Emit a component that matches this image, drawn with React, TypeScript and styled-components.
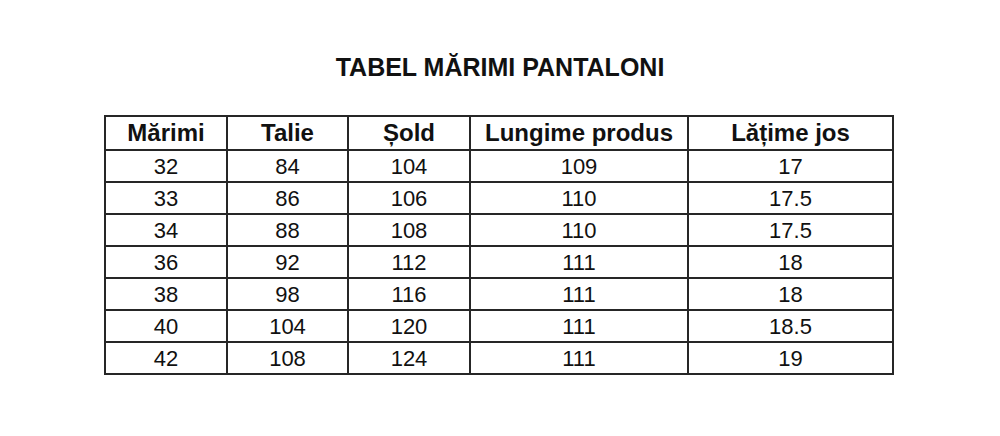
import React from "react";
import styled, { createGlobalStyle } from "styled-components";

const GlobalStyle = createGlobalStyle`
  html, body {
    margin: 0;
    padding: 0;
    background: #ffffff;
  }
  body {
    font-family: "Liberation Sans", Arial, sans-serif;
    color: #111111;
  }
`;

const Page = styled.div`
  width: 1000px;
  height: 436px;
  display: flex;
  flex-direction: column;
  align-items: center;
  padding-top: 53px;
  box-sizing: border-box;
`;

const Title = styled.h1`
  margin: 0 0 34px 0;
  font-size: 25px;
  line-height: 28px;
  font-weight: bold;
  color: #111111;
`;

const Table = styled.table`
  border-collapse: collapse;
  table-layout: fixed;
  width: 788px;
  margin-left: -2px;
  border: 2px solid #262626;
`;

const HeadCell = styled.th<{ $w: number }>`
  width: ${(p) => p.$w - 2}px;
  height: 32px;
  padding: 0;
  border: 2px solid #262626;
  font-size: 24px;
  font-weight: bold;
  text-align: center;
  vertical-align: middle;
  line-height: 28px;
`;

const Cell = styled.td`
  height: 28px;
  padding: 2px 0 0 0;
  border: 2px solid #262626;
  font-size: 22px;
  text-align: center;
  vertical-align: middle;
  line-height: 26px;
`;

const columns = [
  { label: "Mărimi", w: 122 },
  { label: "Talie", w: 121 },
  { label: "Șold", w: 122 },
  { label: "Lungime produs", w: 218 },
  { label: "Lățime jos", w: 205 },
];

const rows = [
  ["32", "84", "104", "109", "17"],
  ["33", "86", "106", "110", "17.5"],
  ["34", "88", "108", "110", "17.5"],
  ["36", "92", "112", "111", "18"],
  ["38", "98", "116", "111", "18"],
  ["40", "104", "120", "111", "18.5"],
  ["42", "108", "124", "111", "19"],
];

export default function App() {
  return (
    <>
      <GlobalStyle />
      <Page>
        <Title>TABEL MĂRIMI PANTALONI</Title>
        <Table>
          <thead>
            <tr>
              {columns.map((c) => (
                <HeadCell key={c.label} $w={c.w}>
                  {c.label}
                </HeadCell>
              ))}
            </tr>
          </thead>
          <tbody>
            {rows.map((r, i) => (
              <tr key={i}>
                {r.map((v, j) => (
                  <Cell key={j}>{v}</Cell>
                ))}
              </tr>
            ))}
          </tbody>
        </Table>
      </Page>
    </>
  );
}
